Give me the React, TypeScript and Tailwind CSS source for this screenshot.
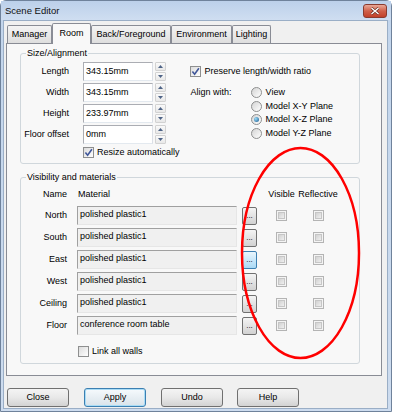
import React from 'react';

function CheckBox({ checked = false, disabled = false }: { checked?: boolean; disabled?: boolean }) {
  if (disabled) {
    return (
      <span className="flex h-[11px] w-[11px] shrink-0 items-center justify-center border border-[#b4b4b4] bg-[#f4f4f4]">
        <span className="h-[7px] w-[7px] border border-[#c6c6c6] bg-linear-to-br from-[#d2d2d2] to-[#efefef]" />
      </span>
    );
  }
  return (
    <span className="flex h-[11px] w-[11px] shrink-0 items-center justify-center border border-[#8e8f8f] bg-linear-to-br from-[#dcdcdc] to-[#ffffff]">
      {checked && (
        <svg width="9" height="9" viewBox="0 0 9 9" className="block">
          <path d="M1.4 4.6 L3.6 7.2 L7.9 1.2" fill="none" stroke="#40579a" strokeWidth="1.6" />
        </svg>
      )}
    </span>
  );
}

function Radio({ on = false }: { on?: boolean }) {
  return (
    <span className="flex h-[11px] w-[11px] shrink-0 items-center justify-center rounded-full border border-[#8e8f8f] bg-linear-to-br from-[#d4d4d4] to-[#ffffff]">
      {on && <span className="h-[5px] w-[5px] rounded-full bg-[radial-gradient(circle_at_35%_35%,#9bdcf8,#17588f)]" />}
    </span>
  );
}

function Spin() {
  return (
    <div className="ml-[2px] flex h-[19px] w-[11px] flex-col gap-[1px]">
      <div className="flex flex-1 items-center justify-center rounded-[1px] border border-[#d2d2d2] bg-linear-to-b from-[#fafafa] to-[#e8e8e8]">
        <svg width="5" height="3" viewBox="0 0 5 3" className="block">
          <path d="M0 3 L2.5 0 L5 3 Z" fill="#4e6386" />
        </svg>
      </div>
      <div className="flex flex-1 items-center justify-center rounded-[1px] border border-[#d2d2d2] bg-linear-to-b from-[#fafafa] to-[#e8e8e8]">
        <svg width="5" height="3" viewBox="0 0 5 3" className="block">
          <path d="M0 0 L2.5 3 L5 0 Z" fill="#4e6386" />
        </svg>
      </div>
    </div>
  );
}

function Btn({ label, primary = false }: { label: string; primary?: boolean }) {
  return (
    <div
      className={
        primary
          ? 'flex h-[19px] w-[62px] items-center justify-center rounded-[3px] border border-[#3c7fb1] bg-linear-to-b from-[#f6fafd] to-[#d9e3ea] shadow-[inset_0_0_0_1px_#a9dcf6]'
          : 'flex h-[19px] w-[62px] items-center justify-center rounded-[3px] border border-[#707070] bg-linear-to-b from-[#f4f4f4] via-[#e8e8e8] to-[#d3d3d3]'
      }
    >
      {label}
    </div>
  );
}

const sizeRows = [
  { label: 'Length', value: '343.15mm' },
  { label: 'Width', value: '343.15mm' },
  { label: 'Height', value: '233.97mm' },
  { label: 'Floor offset', value: '0mm' },
];

const alignOpts = ['View', 'Model X-Y Plane', 'Model X-Z Plane', 'Model Y-Z Plane'];

const walls = [
  { name: 'North', mat: 'polished plastic1' },
  { name: 'South', mat: 'polished plastic1' },
  { name: 'East', mat: 'polished plastic1', hot: true },
  { name: 'West', mat: 'polished plastic1' },
  { name: 'Ceiling', mat: 'polished plastic1' },
  { name: 'Floor', mat: 'conference room table' },
];

const tabs = [
  { label: 'Manager', w: 'w-[45px]' },
  { label: 'Room', w: 'w-[39px]', active: true },
  { label: 'Back/Foreground', w: 'w-[80px]' },
  { label: 'Environment', w: 'w-[61px]' },
  { label: 'Lighting', w: 'w-[39px]' },
];

export default function App() {
  return (
    <div className="relative h-[415px] w-[399px] overflow-hidden bg-white font-['Liberation_Sans',Arial,sans-serif] text-[9px] leading-none text-black">
      {/* window */}
      <div className="flex h-[412px] w-[392px] flex-col rounded-t-[6px] border border-[#6f829b] bg-linear-to-b from-[#c2d5ec] to-[#cddcef]">
        {/* title bar */}
        <div className="flex h-[19px] shrink-0 items-center justify-between pl-[4px] pr-[4px] bg-linear-to-b from-[#bcd0ea] to-[#cfdef1]">
          <span className="text-[9.5px] text-[#111]">Scene Editor</span>
          <div className="flex h-[14px] w-[24px] items-center justify-center rounded-[3px] border border-[#8a3b2f] bg-linear-to-b from-[#e9a898] via-[#d0604a] to-[#c2412a]">
            <svg width="10" height="8" viewBox="0 0 10 8" className="block">
              <path d="M1.5 1 L8.5 7 M8.5 1 L1.5 7" stroke="#5b2218" strokeWidth="2.6" />
              <path d="M1.5 1 L8.5 7 M8.5 1 L1.5 7" stroke="#ffffff" strokeWidth="1.5" />
            </svg>
          </div>
        </div>

        {/* client area */}
        <div className="mb-[2px] ml-[2px] mr-[3px] flex flex-1 flex-col border border-[#9aaec6] bg-[#f0f0f0]">
          {/* tabs */}
          <div className="ml-[3px] mt-[2px] flex h-[21px] items-end">
            {tabs.map((t) =>
              t.active ? (
                <div
                  key={t.label}
                  className={`relative z-10 flex h-[21px] ${t.w} items-center justify-center rounded-t-[2px] border border-b-0 border-[#898c95] bg-[#f8f8f8] pb-[1px]`}
                >
                  {t.label}
                </div>
              ) : (
                <div
                  key={t.label}
                  className={`mb-[1px] flex h-[18px] ${t.w} items-center justify-center rounded-t-[2px] border border-b-0 border-[#898c95] bg-linear-to-b from-[#f4f4f4] to-[#dedede]`}
                >
                  {t.label}
                </div>
              )
            )}
          </div>

          {/* tab page */}
          <div className="-mt-[1px] ml-[2px] flex h-[333px] w-[376px] flex-col border border-[#898c95] bg-[#f8f8f8] pl-[13px]">
            {/* Size/Alignment */}
            <fieldset className="mt-[4px] h-[116px] w-[340px] rounded-[3px] border border-[#d0d7dc]">
              <legend className="ml-[5px] px-[1px] leading-[11px]">Size/Alignment</legend>
              <div className="flex pt-[3px]">
                <div className="flex flex-col">
                  <div className="flex flex-col gap-[2px]">
                    {sizeRows.map((r) => (
                      <div key={r.label} className="flex h-[19px] items-center">
                        <span className="w-[48px] text-right">{r.label}</span>
                        <div className="ml-[14px] flex h-[19px] w-[70px] items-center border border-[#abadb3] border-b-[#e3e9ef] border-r-[#dbdfe6] bg-white pl-[2px]">
                          {r.value}
                        </div>
                        <Spin />
                      </div>
                    ))}
                  </div>
                  <div className="ml-[62px] mt-[2px] flex h-[13px] items-center gap-[3px]">
                    <CheckBox checked />
                    <span>Resize automatically</span>
                  </div>
                </div>

                <div className="ml-[10px] flex flex-col">
                  <div className="flex h-[19px] items-center gap-[4px]">
                    <CheckBox checked />
                    <span>Preserve length/width ratio</span>
                  </div>
                  <div className="mt-[5px] flex">
                    <span className="flex h-[13.5px] w-[61px] items-center pl-[1px]">Align with:</span>
                    <div className="flex flex-col">
                      {alignOpts.map((o, i) => (
                        <div key={o} className="flex h-[13.5px] items-center gap-[4px]">
                          <Radio on={i === 2} />
                          <span>{o}</span>
                        </div>
                      ))}
                    </div>
                  </div>
                </div>
              </div>
            </fieldset>

            {/* Visibility and materials */}
            <fieldset className="mt-[8px] h-[192px] w-[340px] rounded-[3px] border border-[#d0d7dc]">
              <legend className="ml-[5px] px-[1px] leading-[11px]">Visibility and materials</legend>
              <div className="flex flex-col pt-[5px]">
                <div className="flex h-[12px] items-center">
                  <span className="w-[46px] text-right">Name</span>
                  <span className="ml-[10px] w-[160px] pl-[1px]">Material</span>
                  <span className="ml-[5px] w-[15px]" />
                  <span className="ml-[6px] flex w-[37px] justify-center whitespace-nowrap">Visible</span>
                  <span className="flex w-[36px] justify-center whitespace-nowrap">Reflective</span>
                </div>

                <div className="mt-[6px] flex flex-col gap-[3px]">
                  {walls.map((w) => (
                    <div key={w.name} className="flex h-[19px] items-center">
                      <span className="w-[46px] text-right">{w.name}</span>
                      <div className="ml-[10px] h-[19px] w-[160px] border border-[#a0a0a0] border-b-[#e6e6e6] border-r-[#e6e6e6] bg-[#f0f0f0] pl-[2px] pt-[2px] leading-[11px]">
                        {w.mat}
                      </div>
                      <div
                        className={
                          w.hot
                            ? 'ml-[5px] flex h-[18px] w-[15px] items-end justify-center rounded-[2px] border border-[#3c7fb1] bg-linear-to-b from-[#eaf6fd] to-[#a9d9f5] pb-[4px] text-[8px]'
                            : 'ml-[5px] flex h-[18px] w-[15px] items-end justify-center rounded-[2px] border border-[#707070] bg-linear-to-b from-[#f4f4f4] to-[#d2d2d2] pb-[4px] text-[8px]'
                        }
                      >
                        ...
                      </div>
                      <div className="ml-[6px] flex w-[37px] justify-center">
                        <CheckBox disabled />
                      </div>
                      <div className="flex w-[36px] justify-center">
                        <CheckBox disabled />
                      </div>
                    </div>
                  ))}
                </div>

                <div className="ml-[57px] mt-[10px] flex h-[13px] items-center gap-[3px]">
                  <CheckBox />
                  <span>Link all walls</span>
                </div>
              </div>
            </fieldset>
          </div>

          {/* dialog buttons */}
          <div className="ml-[3px] mt-[12px] flex">
            <Btn label="Close" />
            <div className="ml-[15px]">
              <Btn label="Apply" primary />
            </div>
            <div className="ml-[15px]">
              <Btn label="Undo" />
            </div>
            <div className="ml-[14px]">
              <Btn label="Help" />
            </div>
          </div>
        </div>
      </div>

      {/* red annotation ellipse */}
      <svg className="pointer-events-none absolute left-[240px] top-[146px]" width="122" height="215" viewBox="0 0 122 215">
        <ellipse cx="60.5" cy="107" rx="58.5" ry="105" fill="none" stroke="#ff0000" strokeWidth="2.5" />
      </svg>
    </div>
  );
}
